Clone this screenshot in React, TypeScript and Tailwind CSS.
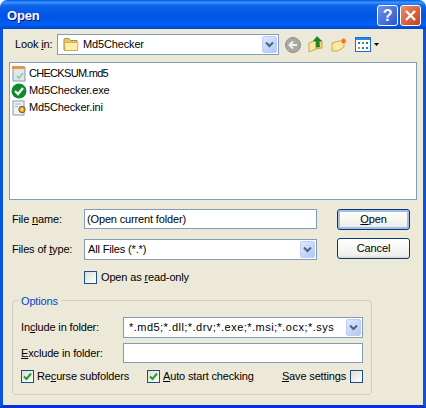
import type { ReactNode } from "react";

const font = "font-['Liberation_Sans',sans-serif]";

function ComboArrow() {
  return (
    <span className="flex h-[17px] w-[15px] shrink-0 items-center justify-center rounded-[2px] border border-[#bdcdf5] bg-[linear-gradient(135deg,#dfe8fd,#b4c7f5)]">
      <svg width="9" height="7" viewBox="0 0 9 7">
        <path d="M1 1.5 L4.5 5 L8 1.5" fill="none" stroke="#4d6185" strokeWidth="2" />
      </svg>
    </span>
  );
}

function Combo({ className, children }: { className: string; children: ReactNode }) {
  return (
    <div className={`flex items-center border border-[#7f9db9] bg-white pr-[1px] ${className}`}>
      <div className="flex min-w-0 flex-1 items-center whitespace-nowrap">{children}</div>
      <ComboArrow />
    </div>
  );
}

function Check({ checked }: { checked?: boolean }) {
  return (
    <span className="flex h-[13px] w-[13px] shrink-0 items-center justify-center border border-[#1c5180] bg-[linear-gradient(135deg,#dcdcd7,#ffffff)]">
      {checked && (
        <svg width="9" height="9" viewBox="0 0 9 9">
          <path d="M1 4.5 L3.5 7 L8 1.5" fill="none" stroke="#21a121" strokeWidth="2" />
        </svg>
      )}
    </span>
  );
}

function Button({ children, active }: { children: ReactNode; active?: boolean }) {
  return (
    <button
      className={`h-[21px] w-[73px] rounded-[3px] border border-[#003c74] bg-[linear-gradient(#ffffff,#f0f0ea_85%,#dcd8ce)] text-black ${
        active ? "shadow-[inset_0_0_0_2px_#a6bce8]" : ""
      }`}
    >
      {children}
    </button>
  );
}

function FolderIcon() {
  return (
    <svg width="16" height="15" viewBox="0 0 16 15">
      <path d="M1 2.5 Q1 1.5 2 1.5 L6 1.5 L7.5 3.5 L14 3.5 L14 13.5 L2 13.5 Q1 13.5 1 12.5 Z" fill="#e8c867" stroke="#b08e34" />
      <path d="M1.5 6.5 Q1.5 5.5 2.5 5.5 L14 5.5 Q15 5.5 15 6.5 L14.5 13.5 L2 13.5 Z" fill="#fdeeaa" stroke="#c4a449" strokeWidth="0.8" />
    </svg>
  );
}

function ToolbarIcons() {
  return (
    <div className="ml-[6px] flex items-center">
      <svg width="16" height="16" viewBox="0 0 16 16">
        <circle cx="8" cy="8" r="7.5" fill="#a9a9a4" stroke="#8f8f8a" />
        <path d="M12 8 H5 M8 4.5 L4.5 8 L8 11.5" fill="none" stroke="#f0f0ee" strokeWidth="2" />
      </svg>
      <svg className="ml-[7px]" width="16" height="17" viewBox="0 0 16 17">
        <path d="M1 7 L8 4 L8 13 L1 16 Z" fill="#fbe9a0" stroke="#c9a94e" />
        <path d="M8 5 L14 5 L14 12 L8 13 Z" fill="#efd27c" stroke="#c9a94e" />
        <path d="M9 0.5 L13.5 5 L11 5 L11.5 11 L8.5 11 L8.5 5 L5.5 5 Z" fill="#1d8a24" stroke="#0f6a18" strokeWidth="0.6" />
      </svg>
      <svg className="ml-[7px]" width="16" height="16" viewBox="0 0 16 16">
        <path d="M1 6 L8 4 L13 4 L13 10 L7 14 L1 14 Z" fill="#fbe9a0" stroke="#c9a94e" />
        <circle cx="12.5" cy="4" r="2.6" fill="#f46a2a" stroke="#fbd0a0" strokeWidth="0.8" />
      </svg>
      <svg className="ml-[8px]" width="16" height="15" viewBox="0 0 16 15">
        <rect x="0.5" y="0.5" width="15" height="14" fill="#ffffff" stroke="#1f6fd0" />
        <rect x="1" y="1" width="14" height="2" fill="#2f86e6" />
        <rect x="3" y="5" width="2" height="2" fill="#3d6fa8" />
        <rect x="7" y="5" width="2" height="2" fill="#3da84f" />
        <rect x="11" y="5" width="2" height="2" fill="#3d6fa8" />
        <rect x="3" y="10" width="2" height="2" fill="#e8774a" />
        <rect x="7" y="10" width="2" height="2" fill="#3d6fa8" />
        <rect x="11" y="10" width="2" height="2" fill="#3d6fa8" />
      </svg>
      <svg className="ml-[3px]" width="5" height="3" viewBox="0 0 5 3">
        <path d="M0 0 H5 L2.5 3 Z" fill="#000000" />
      </svg>
    </div>
  );
}

function FileRow({ icon, name, className = "" }: { icon: ReactNode; name: string; className?: string }) {
  return (
    <div className="flex h-[17px] items-center gap-[2px]">
      <span className="flex h-[16px] w-[16px] items-center justify-center">{icon}</span>
      <span className={className}>{name}</span>
    </div>
  );
}

export default function App() {
  return (
    <div className={`flex h-[408px] w-[426px] flex-col overflow-hidden bg-white text-[11px] tracking-[-0.15px] text-black ${font}`}>
      {/* title bar */}
      <div className="flex h-[29px] shrink-0 items-center rounded-t-[7px] bg-[linear-gradient(#0058e6,#3a93ff_8%,#0d62ea_20%,#0055e5_55%,#0060f5_85%,#0046c8)] pl-[7px] pr-[5px] pt-[2px]">
        <span className="flex-1 text-[13px] font-bold text-white [text-shadow:1px_1px_#0f1089]">Open</span>
        <button className="flex h-[21px] w-[21px] items-center justify-center rounded-[3px] border border-white bg-[linear-gradient(135deg,#6f92ee,#2a55d0)] text-[16px] font-bold text-white">
          ?
        </button>
        <button className="ml-[2px] flex h-[21px] w-[21px] items-center justify-center rounded-[3px] border border-white bg-[linear-gradient(135deg,#ec8b6c,#c8401e)]">
          <svg width="13" height="13" viewBox="0 0 13 13">
            <path d="M2 2 L11 11 M11 2 L2 11" stroke="#ffffff" strokeWidth="2.4" />
          </svg>
        </button>
      </div>

      {/* client area */}
      <div className="flex flex-1 flex-col border-x-[3px] border-b-[3px] border-x-[#0855dd] border-b-[#0831d9] bg-[#ece9d8] pt-[5px]">
        <div className="flex h-[21px] shrink-0 items-center">
          <span className="ml-[12px] w-[42px] whitespace-nowrap">
            Look <span className="underline">i</span>n:
          </span>
          <Combo className="h-[21px] w-[222px]">
            <span className="ml-[5px] mr-[4px] flex">
              <FolderIcon />
            </span>
            Md5Checker
          </Combo>
          <ToolbarIcons />
        </div>

        <div className="mx-[6px] mt-[7px] h-[138px] shrink-0 border border-[#7f9db9] bg-white pl-[1px] pt-[2px]">
          <FileRow
            name="CHECKSUM.md5"
            className="tracking-[-0.7px]"
            icon={
              <svg width="16" height="16" viewBox="0 0 16 16">
                <rect x="2" y="1" width="12" height="14" fill="#dfe6ee" stroke="#8a97a8" />
                <rect x="1" y="0" width="12" height="3" fill="#f0943a" />
                <path d="M6 10 L8 12 L12 7" fill="none" stroke="#9fcb9f" strokeWidth="2" />
              </svg>
            }
          />
          <FileRow
            name="Md5Checker.exe"
            icon={
              <svg width="16" height="16" viewBox="0 0 16 16">
                <circle cx="8" cy="8" r="7.5" fill="#0f8a2c" />
                <path d="M4 8 L7 11 L12 5" fill="none" stroke="#ffffff" strokeWidth="2.2" />
              </svg>
            }
          />
          <FileRow
            name="Md5Checker.ini"
            icon={
              <svg width="16" height="16" viewBox="0 0 16 16">
                <rect x="2" y="1" width="11" height="14" fill="#eef3fa" stroke="#8a97a8" />
                <path d="M4 4 H10 M4 6.5 H7" stroke="#9db4d4" />
                <circle cx="11" cy="9.5" r="3.2" fill="#e5a72c" stroke="#7a5a14" />
                <circle cx="11" cy="9.5" r="1" fill="#fff4cc" />
              </svg>
            }
          />
        </div>

        <div className="ml-[9px] mr-[13px] mt-[9px] flex shrink-0 items-start justify-between">
          <div className="flex flex-col">
            <div className="flex h-[20px] items-center">
              <span className="w-[72px]">
                File <span className="underline">n</span>ame:
              </span>
              <div className="flex h-[20px] w-[233px] items-center border border-[#7f9db9] bg-white pl-[2px]">
                (Open current folder)
              </div>
            </div>
            <div className="mt-[10px] flex h-[21px] items-center">
              <span className="w-[72px]">
                Files of <span className="underline">t</span>ype:
              </span>
              <Combo className="h-[21px] w-[233px] pl-[3px]">All Files (*.*)</Combo>
            </div>
            <div className="ml-[72px] mt-[11px] flex h-[13px] items-center gap-[4px]">
              <Check />
              <span>
                Open as <span className="underline">r</span>ead-only
              </span>
            </div>
          </div>
          <div className="flex flex-col gap-[8px]">
            <Button active>
              <span className="underline">O</span>pen
            </Button>
            <Button>Cancel</Button>
          </div>
        </div>

        <div className="relative ml-[9px] mt-[16px] h-[95px] w-[360px] shrink-0 rounded-[4px] border border-[#d0d0bf] px-[8px] pt-[16px]">
          <span className="absolute left-[5px] top-[-8px] bg-[#ece9d8] px-[3px] text-[#0046d5]">Options</span>
          <div className="flex h-[21px] items-center">
            <span className="w-[102px]">
              In<span className="underline">c</span>lude in folder:
            </span>
            <Combo className="h-[21px] w-[240px] pl-[5px]">
              <span className="tracking-[0.47px]">*.md5;*.dll;*.drv;*.exe;*.msi;*.ocx;*.sys</span>
            </Combo>
          </div>
          <div className="mt-[5px] flex h-[20px] items-center">
            <span className="w-[102px]">
              <span className="underline">E</span>xclude in folder:
            </span>
            <div className="h-[20px] w-[240px] border border-[#7f9db9] bg-white" />
          </div>
          <div className="mt-[7px] flex h-[13px] items-center">
            <Check checked />
            <span className="ml-[3px] w-[110px] whitespace-nowrap">
              Re<span className="underline">c</span>urse subfolders
            </span>
            <Check checked />
            <span className="ml-[3px] flex-1 whitespace-nowrap">
              <span className="underline">A</span>uto start checking
            </span>
            <span className="mr-[4px] whitespace-nowrap">
              <span className="underline">S</span>ave settings
            </span>
            <Check />
          </div>
        </div>
      </div>
    </div>
  );
}
